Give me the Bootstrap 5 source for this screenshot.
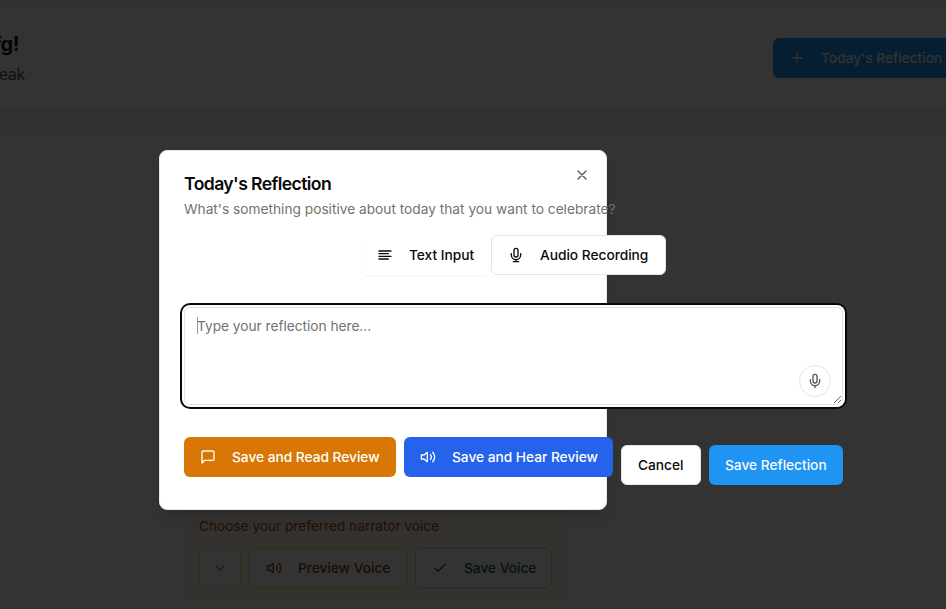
<!DOCTYPE html>
<html lang="en">
<head>
<meta charset="utf-8">
<meta name="viewport" content="width=device-width, initial-scale=1">
<title>Today's Reflection</title>
<link href="https://cdn.jsdelivr.net/npm/bootstrap@5.3.0/dist/css/bootstrap.min.css" rel="stylesheet">
<style>
  body { font-family: Inter, "Liberation Sans", sans-serif; font-size: 13.75px; line-height: 20px; width: 946px; height: 609px; background: #fff; color: #0c0a09; }
  svg { fill: none; stroke: currentColor; stroke-width: 2; stroke-linecap: round; stroke-linejoin: round; width: 16px; height: 16px; flex: none; }
  .stage { height: 609px; }
  .topline { height: 6px; border-bottom: 1px solid #e5e7eb; }
  .hero { height: 104px; }
  .band { height: 25px; background: #fafafa; border-top: 1px solid #e5e7eb; border-bottom: 1px solid #f6f6f6; }
  .clip-end { display: flex; justify-content: flex-end; overflow: hidden; white-space: nowrap; }
  .greet { width: 19px; font-size: 20px; font-weight: 700; line-height: 28px; letter-spacing: -.5px; color: #111827; }
  .streak { width: 25px; font-size: 16px; line-height: 24px; letter-spacing: -.3px; color: #4b5563; }
  .act { height: 40px; padding: 0 15px; display: inline-flex; align-items: center; border: 1px solid transparent; border-radius: 6px; font-size: 13.75px; font-weight: 500; line-height: 20px; letter-spacing: -.03px; white-space: nowrap; flex: none; }
  .act svg { margin-right: 16px; }
  .act-sky { background: #2094f3; color: #f8fafc; }
  .act-amber { background: #d97706; color: #fff; width: 212px; }
  .act-blue { background: #2563eb; color: #fff; width: 209px; }
  .act-line { background: #fff; border-color: #e5e5e5; color: #0c0a09; padding: 0 16px; }
  .top-act { width: 173px; }
  .w-top { width: 186px; }
  .act.w-text { width: 130px; padding: 0 15px; border-color: transparent; box-shadow: 0 1px 2px rgba(0,0,0,.05); }
  .w-audio { width: 175px; }
  .w-cancel { width: 80px; }
  .w-save { width: 134px; }
  .voice { width: 384px; height: 203px; margin: 265px 0 0 184px; padding: 0 16px 15px 15px; background: #fffbeb; border-radius: 8px; color: #b45309; }
  .voice-label { letter-spacing: -.06px; }
  .act.w-chev { width: 42px; padding: 0; justify-content: center; border-color: #fde68a; color: #78716c; }
  .w-chev svg { margin: 0; opacity: .85; }
  .w-prev { width: 158px; border-color: #fcd34d; color: #92400e; }
  .w-sv { width: 137px; border-color: #86efac; color: #166534; }
  .shade { background: rgba(0,0,0,.8); }
  .sheet { width: 448px; height: 360px; margin: 150px 0 0 159px; padding: 24px; background: #fff; border: 1px solid #e5e5e5; border-radius: 8px; box-shadow: 0 10px 15px -3px rgba(0,0,0,.1), 0 4px 6px -4px rgba(0,0,0,.1); }
  .sheet-body { width: 659px; }
  .heading { font-size: 17.6px; font-weight: 600; line-height: 18px; letter-spacing: -.6px; margin: 0; }
  .hint { color: #78716c; margin: 6px 0 0; white-space: nowrap; letter-spacing: -.02px; }
  .shut { top: 16px; right: 16px; width: 16px; height: 16px; opacity: .7; }
  .shut svg { display: block; }
  .tabs-row { margin-top: 16px; }
  .entry { margin-top: 32px; height: 98px; }
  .entry textarea { display: block; width: 100%; height: 98px; padding: 8px 12px; border: 1px solid #e5e5e5; border-radius: 6px; outline: none; box-shadow: 0 0 0 2px #fff, 0 0 0 4px #0c0a09; font-size: 13.75px; line-height: 20px; letter-spacing: -.04px; resize: vertical; }
  .entry textarea::placeholder { color: #78716c; opacity: 1; }
  .cursor { left: 13px; top: 10px; width: 1px; height: 17px; background: #999; }
  .mic { right: 12px; bottom: 8px; width: 32px; height: 32px; border: 1px solid #e5e5e5; border-radius: 50%; background: #fff; color: #4b5563; }
  .foot { margin-top: 32px; }
  .foot-end { padding-top: 8px; }
</style>
</head>
<body>
<div class="stage position-relative overflow-hidden">
  <div class="topline"></div>
  <header class="hero d-flex justify-content-between align-items-center">
    <div>
      <div class="greet clip-end"><span>fg!</span></div>
      <div class="streak clip-end mt-1"><span>eak</span></div>
    </div>
    <div class="top-act d-flex">
      <span class="act act-sky w-top"><svg viewBox="0 0 24 24"><path d="M5 12h14M12 5v14"/></svg>Today's Reflection</span>
    </div>
  </header>
  <div class="band"></div>
  <section class="voice d-flex flex-column justify-content-end">
    <div class="voice-label mb-2 pb-1">Choose your preferred narrator voice</div>
    <div class="d-flex gap-2">
      <span class="act act-line w-chev"><svg viewBox="0 0 24 24"><path d="m6 9 6 6 6-6"/></svg></span>
      <span class="act act-line w-prev"><svg viewBox="0 0 24 24"><path d="M11 5 6 9H2v6h4l5 4zM15.54 8.46a5 5 0 0 1 0 7.07M19.07 4.93a10 10 0 0 1 0 14.14"/></svg>Preview Voice</span>
      <span class="act act-line w-sv"><svg viewBox="0 0 24 24"><path d="M20 6 9 17l-5-5"/></svg>Save Voice</span>
    </div>
  </section>

  <div class="shade position-absolute top-0 start-0 w-100 h-100">
    <div class="sheet position-relative">
      <span class="shut position-absolute"><svg viewBox="0 0 24 24"><path d="M18 6 6 18M6 6l12 12"/></svg></span>
      <div class="sheet-body">
        <h2 class="heading">Today's Reflection</h2>
        <p class="hint">What's something positive about today that you want to celebrate?</p>
        <div class="tabs-row d-flex justify-content-center">
          <button type="button" class="act act-line w-text"><svg viewBox="0 0 24 24"><path d="M21 6H3M17 10H3M21 14H3M17 18H3"/></svg>Text Input</button>
          <button type="button" class="act act-line w-audio"><svg viewBox="0 0 24 24"><path d="M12 2a3 3 0 0 0-3 3v7a3 3 0 0 0 6 0V5a3 3 0 0 0-3-3zM19 10v2a7 7 0 0 1-14 0v-2M12 19v3M8 22h8"/></svg>Audio Recording</button>
        </div>
        <div class="entry position-relative">
          <textarea placeholder="Type your reflection here..."></textarea>
          <span class="cursor position-absolute"></span>
          <span class="mic position-absolute d-flex align-items-center justify-content-center"><svg viewBox="0 0 24 24"><path d="M12 2a3 3 0 0 0-3 3v7a3 3 0 0 0 6 0V5a3 3 0 0 0-3-3zM19 10v2a7 7 0 0 1-14 0v-2M12 19v3"/></svg></span>
        </div>
        <div class="foot d-flex gap-2">
          <button type="button" class="act act-amber"><svg viewBox="0 0 24 24"><path d="M21 15a2 2 0 0 1-2 2H7l-4 4V5a2 2 0 0 1 2-2h14a2 2 0 0 1 2 2z"/></svg>Save and Read Review</button>
          <button type="button" class="act act-blue"><svg viewBox="0 0 24 24"><path d="M11 5 6 9H2v6h4l5 4zM15.54 8.46a5 5 0 0 1 0 7.07M19.07 4.93a10 10 0 0 1 0 14.14"/></svg>Save and Hear Review</button>
          <div class="foot-end d-flex gap-2">
            <button type="button" class="act act-line w-cancel">Cancel</button>
            <button type="button" class="act act-sky w-save">Save Reflection</button>
          </div>
        </div>
      </div>
    </div>
  </div>
</div>
<script src="https://cdn.jsdelivr.net/npm/bootstrap@5.3.0/dist/js/bootstrap.bundle.min.js"></script>
</body>
</html>
